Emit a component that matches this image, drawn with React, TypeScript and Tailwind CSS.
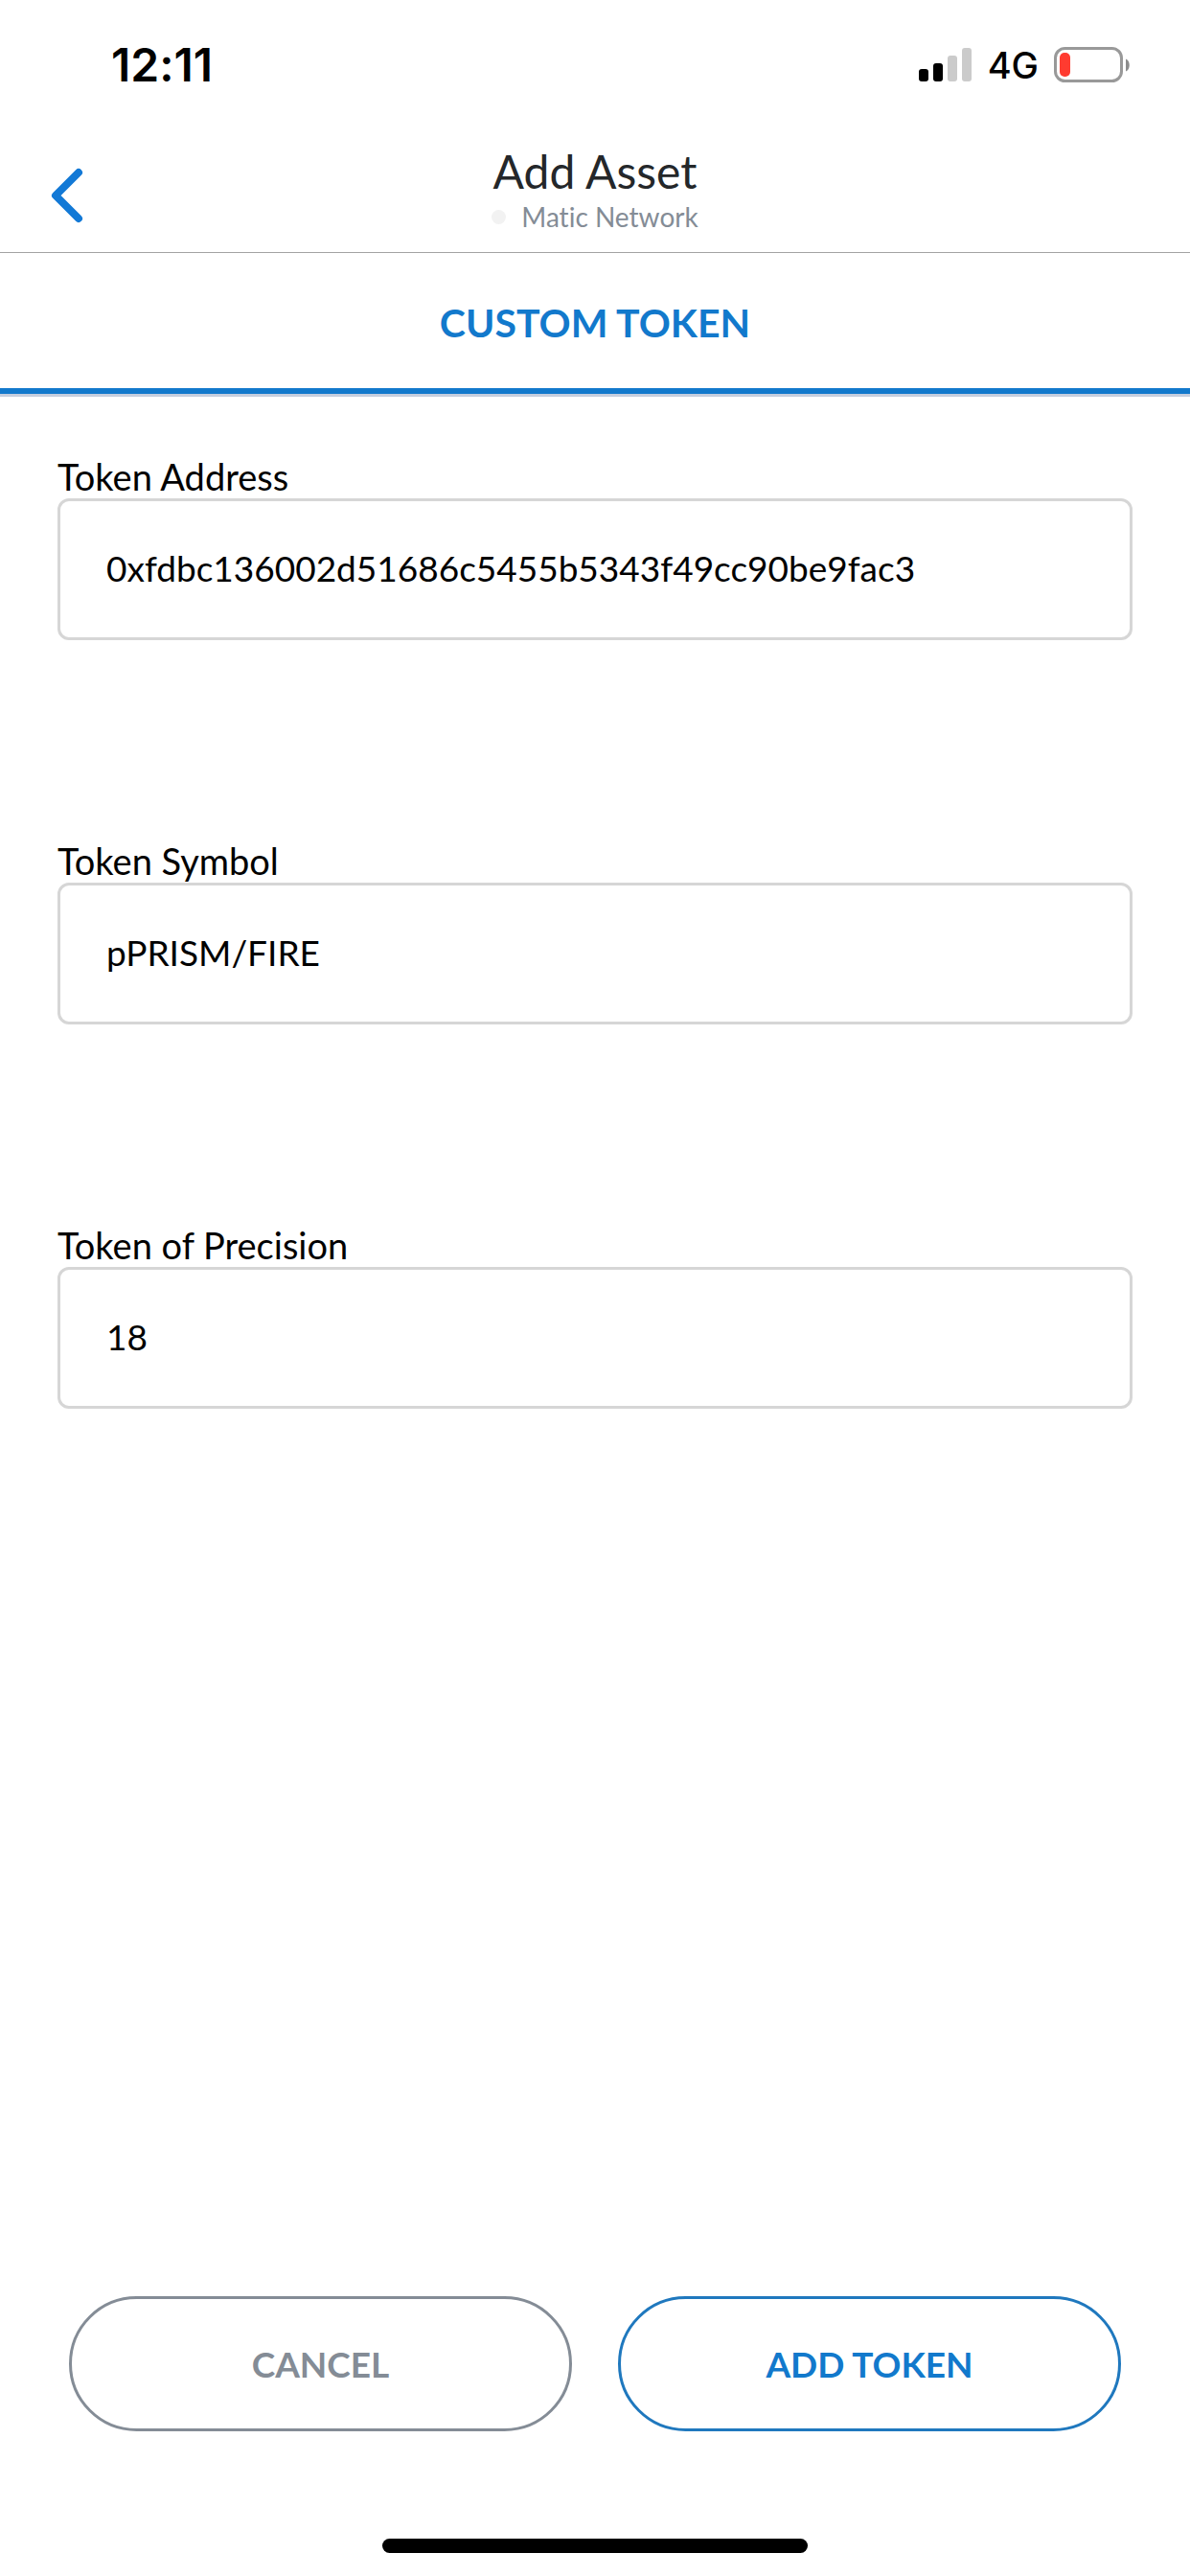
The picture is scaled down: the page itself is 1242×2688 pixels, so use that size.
import { useState } from 'react';

function StatusBar() {
  return (
    <div className="flex h-[136px] items-center justify-between pr-[62px] pl-[116px] font-['Inter',sans-serif] text-black">
      <span className="text-[48px] leading-none font-semibold">12:11</span>
      <div className="flex items-center gap-4">
        <svg className="h-9 w-14" viewBox="0 0 56 36" aria-hidden="true">
          <rect x="0" y="22" width="10" height="13" rx="3" fill="#000" />
          <rect x="15" y="16" width="10" height="19" rx="3" fill="#000" />
          <rect x="30" y="8" width="10" height="27" rx="3" fill="#cbcbcb" />
          <rect x="45" y="0" width="10" height="35" rx="3" fill="#cbcbcb" />
        </svg>
        <span className="text-[38px] leading-none font-medium">4G</span>
        <svg className="h-[38px] w-20" viewBox="0 0 80 38" aria-hidden="true">
          <rect x="1.5" y="1.5" width="69" height="34" rx="10" fill="none" stroke="#999" strokeWidth="3" />
          <rect x="6" y="6" width="11" height="25" rx="5" fill="#ff3b30" />
          <path d="M75 12.500C80 14.500 80 23.500 75 25.500Z" fill="#8c8c8c" />
        </svg>
      </div>
    </div>
  );
}

function Header() {
  return (
    <header className="grid h-[128px] grid-cols-[120px_1fr_120px] border-b border-[#a3a3a3]">
      <button type="button" aria-label="Back" className="flex items-center pt-2 pl-[52px]">
        <svg className="h-[60px] w-9" viewBox="0 0 36 60" fill="none" stroke="#1279d6" strokeWidth="8" strokeLinecap="round" strokeLinejoin="round" aria-hidden="true">
          <path d="M30 6L6 30L30 54" />
        </svg>
      </button>
      <div className="flex flex-col items-center pt-4">
        <h1 className="text-[48px] leading-[54px] text-[#24272a]">Add Asset</h1>
        <p className="flex items-center gap-4 text-[28px] leading-10 text-[#848c96]">
          <span className="size-[15px] rounded-full bg-[#f2f2f2]" />
          Matic Network
        </p>
      </div>
    </header>
  );
}

type FieldProps = { id: string; label: string; initial: string };

function Field({ id, label, initial }: FieldProps) {
  const [value, setValue] = useState(initial);
  return (
    <div className="flex flex-col">
      <label htmlFor={id} className="text-[38px] leading-[46px] text-black">
        {label}
      </label>
      <input
        id={id}
        value={value}
        onChange={(e) => setValue(e.target.value)}
        className="h-[148px] w-full rounded-xl border-3 border-[#d6d6d6] bg-white px-12 pb-1 text-[37px] text-black outline-none"
      />
    </div>
  );
}

export default function App() {
  return (
    <div className="flex min-h-screen flex-col bg-white font-['Lato',sans-serif] [font-variant-ligatures:none]">
      <StatusBar />
      <Header />
      <nav className="border-b-3 border-[#c5cede]">
        <button type="button" className="h-[147px] w-full border-b-6 border-[#1279cc] pt-1 text-[41px] font-bold text-[#1279cc]">
          CUSTOM TOKEN
        </button>
      </nav>
      <form className="flex flex-1 flex-col" onSubmit={(e) => e.preventDefault()}>
        <div className="flex flex-col gap-[207px] px-15 pt-15">
          <Field id="address" label="Token Address" initial="0xfdbc136002d51686c5455b5343f49cc90be9fac3" />
          <Field id="symbol" label="Token Symbol" initial="pPRISM/FIRE" />
          <Field id="precision" label="Token of Precision" initial="18" />
        </div>
        <div className="mt-auto grid grid-cols-2 gap-12 px-[72px]">
          <button type="button" className="h-[141px] rounded-full border-3 border-[#848c96] text-[37px] font-bold text-[#848c96]">
            CANCEL
          </button>
          <button type="submit" className="h-[141px] rounded-full border-3 border-[#1f78be] text-[37px] font-bold text-[#1279cc]">
            ADD TOKEN
          </button>
        </div>
      </form>
      <div className="mt-28 mb-6 h-[15px] w-[444px] self-center rounded-full bg-black" />
    </div>
  );
}
